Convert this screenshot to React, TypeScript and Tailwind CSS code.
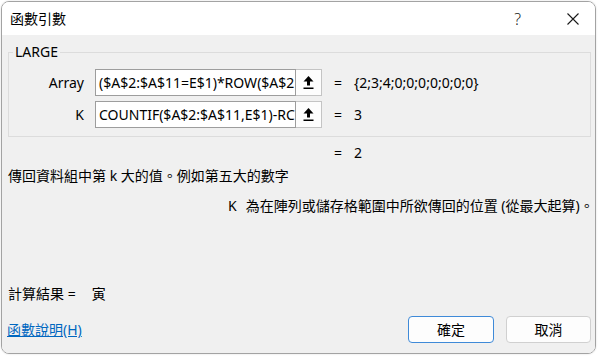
import React from "react";

const font = { fontFamily: '"Noto Sans", "Noto Sans CJK TC", sans-serif' };

function UpIcon() {
  return (
    <svg width="11" height="15" viewBox="0 0 11 15">
      <polygon points="0.5,6.5 5.5,1 10.5,6.5" fill="#000" />
      <rect x="4" y="6" width="3" height="4.5" fill="#000" />
      <rect x="0.5" y="12.5" width="10" height="1.5" fill="#000" />
    </svg>
  );
}

function Row({ label, text, value }: { label: string; text: string; value: string }) {
  return (
    <div className="flex items-center h-[27px]">
      <div className="w-[75px] text-right text-[14px] text-black leading-[20px]">{label}</div>
      <div className="ml-[11px] w-[201px] h-[27px] bg-white border border-[#9d9d9d] overflow-hidden whitespace-nowrap pl-[3px] text-[14px] leading-[25px] text-black">
        {text}
      </div>
      <div className="w-[26px] h-[27px] bg-[#fdfdfd] border border-[#c4c4c4] border-l-0 flex items-center justify-center">
        <UpIcon />
      </div>
      <div className="ml-[12px] w-[20px] text-[14px] leading-[20px] text-black">=</div>
      <div className="text-[14px] leading-[20px] text-black whitespace-nowrap">{value}</div>
    </div>
  );
}

export default function App() {
  return (
    <div className="w-[600px] h-[357px] bg-white pt-[1px] pl-[1px]" style={font}>
      <div className="w-[595px] h-[353px] border border-[#a3a3a3] rounded-[8px] overflow-hidden flex flex-col shadow-[0_0_2px_rgba(0,0,0,0.15)]">
        <div className="h-[33px] shrink-0 bg-white flex items-center pl-[8px] text-[14px] text-black">
          <span className="leading-[20px]">函數引數</span>
          <span className="ml-auto text-[16px] leading-[20px] text-[#1a1a1a] mr-[46px]" style={{ fontFamily: '"Noto Sans", sans-serif', fontWeight: 300 }}>?</span>
          <svg width="12" height="12" viewBox="0 0 12 12" className="mr-[16px]">
            <path d="M0.5 0.5 L11.5 11.5 M11.5 0.5 L0.5 11.5" stroke="#1a1a1a" strokeWidth="1.1" fill="none" />
          </svg>
        </div>
        <div className="flex-1 bg-[#f0f0f0] flex flex-col text-black">
          <div className="relative mt-[17px] ml-[6px] mr-[4px] border border-[#dcdcdc] pt-[16px] pb-[8px] flex flex-col gap-[5px]">
            <span className="absolute -top-[10px] left-[4px] px-[2px] bg-[#f0f0f0] text-[14px] leading-[18px]">LARGE</span>
            <Row label="Array" text="($A$2:$A$11=E$1)*ROW($A$2" value="{2;3;4;0;0;0;0;0;0;0}" />
            <Row label="K" text="COUNTIF($A$2:$A$11,E$1)-RC" value="3" />
          </div>
          <div className="mt-[5px] pl-[332px] flex h-[20px] items-center text-[14px]">
            <span className="w-[20px]">=</span>
            <span>2</span>
          </div>
          <div className="mt-[3px] pl-[6px] h-[20px] flex items-center text-[14px] whitespace-nowrap">
            傳回資料組中第 k 大的值。例如第五大的數字
          </div>
          <div className="mt-[10px] pl-[226px] h-[20px] flex items-center text-[14px] whitespace-nowrap">
            <span>K</span>
            <span className="ml-[9px]">為在陣列或儲存格範圍中所欲傳回的位置 (從最大起算)。</span>
          </div>
          <div className="mt-[68px] pl-[6px] h-[20px] flex items-center text-[14px] whitespace-nowrap">
            <span>計算結果 =</span>
            <span className="ml-[16px]">寅</span>
          </div>
          <div className="mt-[13px] pl-[5px] flex items-center">
            <a className="text-[14px] text-[#0067c0] underline leading-[20px]" href="#">函數說明(H)</a>
            <button className="ml-auto w-[86px] h-[27px] rounded-[4px] border border-[#3f8ad8] bg-[#fdfdfd] text-[14px] text-black">確定</button>
            <button className="ml-[12px] mr-[4px] w-[85px] h-[27px] rounded-[4px] border border-[#d0d0d0] bg-[#fdfdfd] text-[14px] text-black">取消</button>
          </div>
        </div>
      </div>
    </div>
  );
}
